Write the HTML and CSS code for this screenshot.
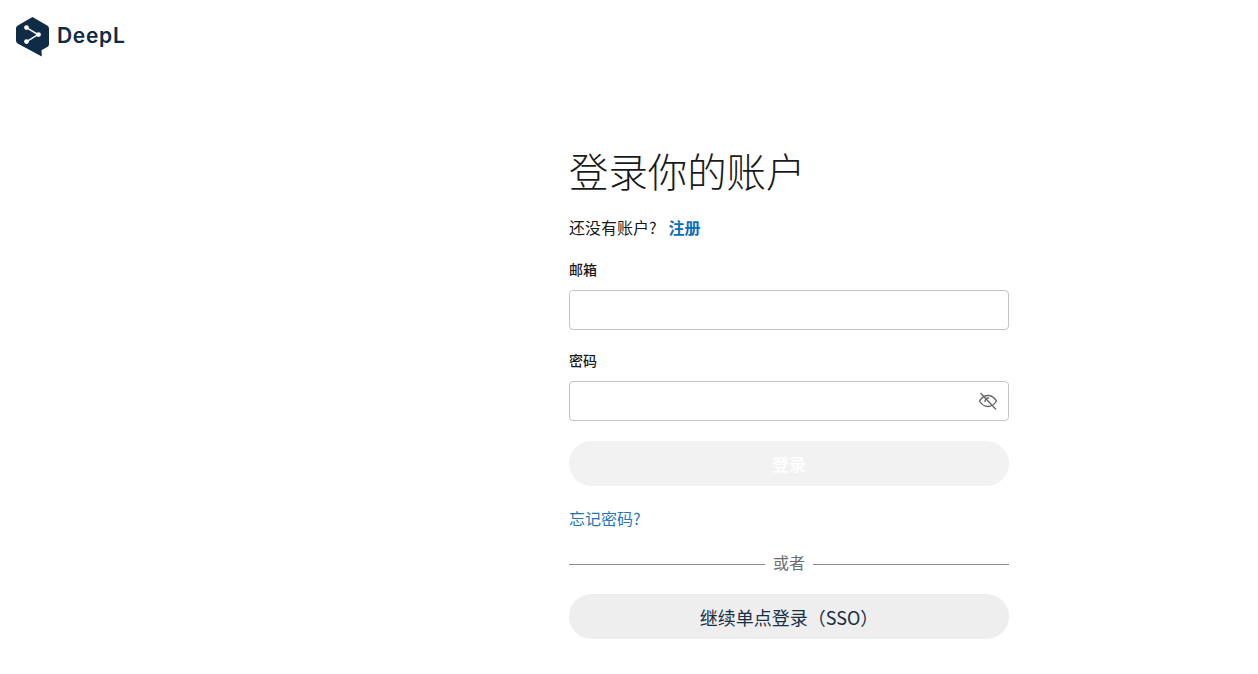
FILE: index.html
```html
<!DOCTYPE html>
<html lang="zh-CN">
<head>
<meta charset="utf-8">
<title>DeepL</title>
<link rel="stylesheet" href="styles.css">
</head>
<body>
<header class="top">
  <a class="brand" href="#">
    <svg class="logo" width="33" height="40" viewBox="0 0 33 40" aria-hidden="true">
      <path class="logo-hex" d="M16.5 0 L31.2 8.4 Q33 9.5 33 11.5 V27.5 Q33 29 31.6 29.8 L25.5 33.2 L25.8 39.5 L16.5 34.6 L1.6 26.4 Q0 25.5 0 23.6 V11.5 Q0 9.5 1.8 8.4 Z"/>
      <path class="logo-line" d="M10.5 10.6 L22 17.6 L11 24.4"/>
      <circle class="logo-dot" cx="10.5" cy="10.6" r="2.4"/>
      <circle class="logo-dot" cx="22.5" cy="17.6" r="2.4"/>
      <circle class="logo-dot" cx="10.5" cy="24.6" r="2.4"/>
    </svg>
    <span class="brand-name">DeepL</span>
  </a>
</header>
<main class="page">
  <form class="panel">
    <h1 class="title">登录你的账户</h1>
    <p class="signup"><span>还没有账户?</span><a class="signup-link" href="#">注册</a></p>
    <label class="label label-mail" for="mail">邮箱</label>
    <input class="field" id="mail" type="text">
    <label class="label label-pass" for="pass">密码</label>
    <div class="pass-wrap">
      <input class="field" id="pass" type="password">
      <svg class="eye" width="22" height="22" viewBox="0 0 22 22" aria-hidden="true">
        <path d="M2.5 11 C5 7 8 5.5 11 5.5 C14 5.5 17 7 19.5 11 C17 15 14 16.5 11 16.5 C8 16.5 5 15 2.5 11 Z"/>
        <path d="M8.2 12 A3 3 0 0 1 12 8.2"/>
        <path d="M3.5 3 L19 19.5"/>
      </svg>
    </div>
    <button class="btn btn-login" type="button" disabled>登录</button>
    <a class="forgot" href="#">忘记密码?</a>
    <div class="divider"><span class="rule"></span><span class="or">或者</span><span class="rule"></span></div>
    <button class="btn btn-sso" type="button">继续单点登录（SSO）</button>
  </form>
</main>
</body>
</html>
```
FILE: styles.css
```css
* { box-sizing: border-box; }
html, body { margin: 0; padding: 0; height: 100%; overflow: hidden; background: #fff; }
body { font-family: "Noto Sans CJK SC", "Noto Sans", sans-serif; color: #1a1a1a; font-size: 16px; }
.top { padding: 17px 16px 0; height: 57px; }
.brand { display: inline-flex; align-items: center; gap: 8px; text-decoration: none; }
.logo { display: block; }
.logo-hex { fill: #0f2b46; }
.logo-line { fill: none; stroke: #fff; stroke-width: 1.5; }
.logo-dot { fill: #fff; }
.brand-name { font-family: "Inter", sans-serif; font-weight: 600; font-size: 21px; letter-spacing: 0.7px; line-height: 36px; color: #0f2b46; margin-top: -3px; }
.page { display: flex; justify-content: center; padding-left: 320px; }
.panel { width: 440px; display: flex; flex-direction: column; padding-top: 85px; }
.title { margin: 0; font-size: 39.4px; line-height: 56px; font-weight: 300; color: #1a1a1a; }
.signup { margin: 16px 0 0; line-height: 26px; font-size: 16px; display: flex; gap: 12px; }
.signup-link { color: #0a6ebd; font-weight: 700; text-decoration: none; font-size: 16px; }
.label { font-size: 14px; line-height: 20px; font-weight: 500; color: #1a1a1a; }
.label-mail { margin-top: 19px; }
.label-pass { margin-top: 20px; }
.field { display: block; width: 100%; height: 40px; margin-top: 11px; border: 1px solid #c4c4c4; border-radius: 4px; background: #fff; outline: none; }
.pass-wrap { position: relative; }
.eye { position: absolute; right: 10px; top: 20px; fill: none; stroke: #666; stroke-width: 1.4; }
.btn { display: block; width: 100%; height: 45px; border: 0; border-radius: 23px; font-family: inherit; font-size: 17px; }
.btn-login { margin-top: 20px; background: #f2f2f2; color: #fff; font-weight: 500; }
.forgot { margin-top: 20px; font-size: 16px; line-height: 24px; color: #1f76b8; text-decoration: none; }
.divider { display: flex; align-items: center; gap: 8px; margin-top: 22px; height: 24px; }
.rule { flex: 1; height: 1px; background: #8c8c8c; }
.or { color: #6d6d6d; font-size: 16px; line-height: 24px; margin-bottom: 5px; }
.btn-sso { margin-top: 18px; background: #eeeeee; color: #1b2f44; font-size: 18px; }
```
